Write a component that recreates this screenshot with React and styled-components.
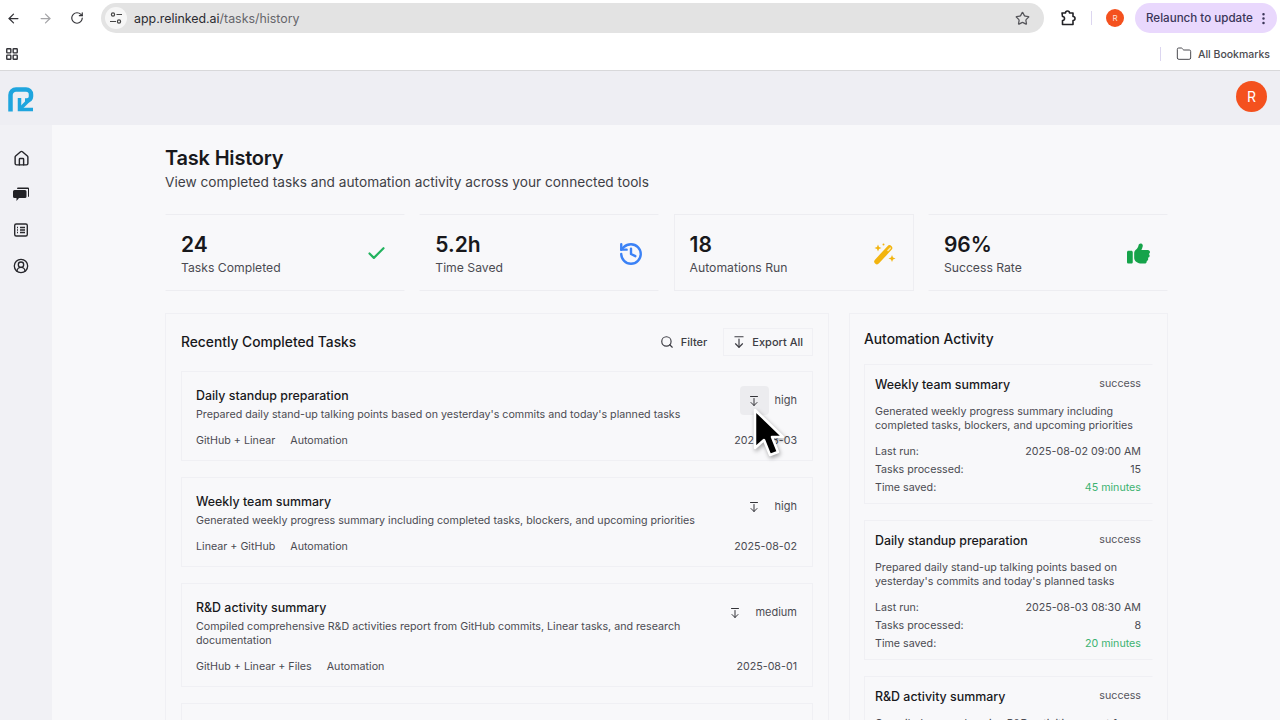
import styled, { createGlobalStyle } from "styled-components";
import {
  ArrowDownFromLine,
  ArrowLeft,
  ArrowRight,
  Check,
  CircleUserRound,
  EllipsisVertical,
  Folder,
  History,
  Home,
  LayoutGrid,
  RotateCw,
  Search,
  Star,
} from "lucide-react";
import { FaThumbsUp } from "react-icons/fa6";

const GlobalStyle = createGlobalStyle`
  html, body {
    margin: 0;
    height: 100%;
    overflow: hidden;
    background: #f8f8fa;
    font-family: Inter, "Liberation Sans", sans-serif;
  }
  * { box-sizing: border-box; }
`;

const Page = styled.div`
  position: relative;
  width: 1280px;
  height: 720px;
  display: flex;
  flex-direction: column;
  overflow: hidden;
`;

const Toolbar = styled.div`
  height: 36px;
  flex: none;
  display: flex;
  align-items: center;
  background: #fff;
  color: #3c3c40;
  padding: 0 3px 0 5px;
`;

const NavButton = styled.span`
  width: 16px;
  height: 16px;
  margin-right: 16px;
  display: flex;
  align-items: center;
  justify-content: center;
  color: ${(p) => (p.$off ? "#a5a5a8" : "#333338")};
`;

const UrlBar = styled.div`
  width: 943px;
  height: 30px;
  border-radius: 15px;
  background: #e3e3e3;
  display: flex;
  align-items: center;
  padding: 0 14px 0 4px;
  font-size: 12.4px;
  color: #66666b;
`;

const SiteChip = styled.span`
  width: 22px;
  height: 22px;
  border-radius: 50%;
  background: #f6f6f6;
  display: flex;
  align-items: center;
  justify-content: center;
  margin-right: 7px;
`;

const Host = styled.span`
  color: #2b2b30;
`;

const UrlEnd = styled.span`
  margin-left: auto;
  display: flex;
  color: #55555a;
`;

const ToolIcon = styled.span`
  margin-left: 15px;
  display: flex;
  color: #222226;
`;

const VDivider = styled.span`
  width: 1px;
  height: 14px;
  background: #dcd6f0;
  margin: 0 ${(p) => p.$right}px 0 ${(p) => p.$left}px;
`;

const MiniAvatar = styled.span`
  width: 18px;
  height: 18px;
  border-radius: 50%;
  background: #f4511e;
  color: #fde0d4;
  font-size: 8px;
  display: flex;
  align-items: center;
  justify-content: center;
`;

const Relaunch = styled.div`
  width: 142px;
  height: 30px;
  margin-left: 11px;
  border-radius: 15px;
  background: #e9d8fd;
  color: #3a3558;
  font-size: 11.6px;
  font-weight: 500;
  display: flex;
  align-items: center;
  padding-left: 11px;
  white-space: nowrap;
  gap: 3px;
`;

const BookmarksBar = styled.div`
  height: 35px;
  flex: none;
  background: #fff;
  border-bottom: 1px solid #d8d8da;
  display: flex;
  align-items: center;
  padding: 2px 10px 0 5px;
  color: #333338;
`;

const AllBookmarks = styled.div`
  margin-left: auto;
  display: flex;
  align-items: center;
  font-size: 10.5px;
  font-weight: 500;
  color: #4b4b50;
  gap: 6px;
`;

const AppHeader = styled.header`
  height: 54px;
  flex: none;
  background: #eeeef3;
  display: flex;
  align-items: center;
  justify-content: space-between;
  padding: 0 13px 0 8px;
`;

const LogoMark = styled.svg`
  margin-top: 3px;
`;

const Avatar = styled.span`
  width: 31px;
  height: 31px;
  margin-bottom: 3px;
  border-radius: 50%;
  background: #f4511e;
  color: #fff;
  font-size: 14px;
  display: flex;
  align-items: center;
  justify-content: center;
`;

const Body = styled.div`
  flex: 1;
  min-height: 0;
  display: flex;
`;

const Sidebar = styled.nav`
  width: 52px;
  flex: none;
  background: #f1f1f5;
  display: flex;
  flex-direction: column;
  align-items: center;
  padding: 24px 10px 0 0;
  gap: 18px;
  color: #26262b;
`;

const SideIcon = styled.span`
  width: 18px;
  height: 18px;
  display: flex;
  align-items: center;
  justify-content: center;
`;

const Main = styled.main`
  flex: 1;
  min-width: 0;
  padding: 21px 0 0 113px;
  color: #18181c;
`;

const Title = styled.h1`
  margin: 0;
  font-size: 20px;
  line-height: 24px;
  font-weight: 600;
  letter-spacing: -0.2px;
`;

const Subtitle = styled.p`
  margin: 3px 0 0;
  font-size: 13.7px;
  line-height: 18px;
  color: #3f3f46;
`;

const Stats = styled.section`
  width: 1003px;
  margin-top: 23px;
  display: grid;
  grid-template-columns: repeat(4, 240px);
  column-gap: 14.3px;
`;

const StatCard = styled.div`
  height: 77px;
  border: 1px solid ${(p) => (p.$boxed ? "#eeeef2" : "transparent")};
  border-top-color: #ededf1;
  border-bottom-color: #ededf1;
  display: flex;
  align-items: center;
  justify-content: space-between;
  padding: 2px 17px 0 15px;
`;

const StatValue = styled.div`
  font-size: 21px;
  line-height: 26px;
  font-weight: 600;
`;

const StatLabel = styled.div`
  font-size: 12.2px;
  line-height: 16px;
  margin-top: 2px;
  color: #4b4b52;
`;

const StatIcon = styled.span`
  display: flex;
  margin-right: ${(p) => p.$nudge || 0}px;
  color: ${(p) => p.$color};
`;

const Columns = styled.div`
  width: 1003px;
  margin-top: 22px;
  display: flex;
  justify-content: space-between;
  align-items: flex-start;
`;

const Panel = styled.section`
  width: ${(p) => p.$width}px;
  border: 1px solid #f0f0f4;
  border-bottom: 0;
  padding: 14px ${(p) => p.$pad}px 0;
  display: flex;
  flex-direction: column;
  gap: 16px;
`;

const PanelHeader = styled.div`
  height: ${(p) => p.$height}px;
  display: flex;
  align-items: center;
  margin-bottom: ${(p) => p.$after || 0}px;
`;

const PanelTitle = styled.h2`
  margin: 0;
  font-size: 13.8px;
  font-weight: 500;
  flex: 1;
`;

const PlainAction = styled.span`
  display: flex;
  align-items: center;
  gap: 7px;
  font-size: 11px;
  font-weight: 500;
  color: #3d3d44;
  height: 28px;
`;

const BoxedAction = styled(PlainAction)`
  gap: 6px;
  padding: 0 9px 0 8px;
  margin-left: 16px;
  border: 1px solid #f0f0f4;
`;

const TaskCard = styled.article`
  border: 1px solid #f0f0f4;
  padding: 15px 15px 0 14px;
  min-height: ${(p) => p.$height || 90}px;
`;

const TaskTop = styled.div`
  display: flex;
  justify-content: space-between;
  align-items: flex-start;
`;

const TaskText = styled.div`
  width: 520px;
`;

const TaskTitle = styled.div`
  font-size: 12.4px;
  line-height: 18px;
  font-weight: 500;
`;

const TaskDesc = styled.div`
  font-size: 10.7px;
  line-height: 14px;
  margin-top: 3px;
  color: #4b4b52;
`;

const Priority = styled.div`
  display: flex;
  align-items: center;
  gap: 6px;
  margin-top: -1px;
  font-size: 11px;
  color: #4b4b52;
`;

const Level = styled.span`
  margin-bottom: 2px;
`;

const RowIcon = styled.span`
  width: 29px;
  height: 29px;
  border-radius: 4px;
  background: ${(p) => (p.$hover ? "#ececef" : "transparent")};
  display: flex;
  align-items: center;
  justify-content: center;
  color: #333338;
`;

const TaskMeta = styled.div`
  display: flex;
  font-size: 10.7px;
  line-height: 14px;
  color: #4b4b52;
  margin-top: ${(p) => p.$gap}px;
  gap: 15px;
`;

const TaskDate = styled.span`
  margin-left: auto;
`;

const ActivityCard = styled.article`
  border: 1px solid #f0f0f4;
  border-right-color: transparent;
  padding: 11px 11px 0 10px;
  height: 140px;
`;

const ActivityTop = styled.div`
  display: flex;
  justify-content: space-between;
  align-items: flex-start;
`;

const ActivityName = styled.div`
  font-size: 12.4px;
  line-height: 17px;
  font-weight: 500;
`;

const ActivityStatus = styled.span`
  font-size: 10.7px;
  line-height: 15px;
  color: #55555c;
`;

const ActivityDesc = styled.div`
  font-size: 10.7px;
  line-height: 14px;
  margin: 12px 0 10px;
  color: #4b4b52;
`;

const InfoRow = styled.div`
  display: flex;
  justify-content: space-between;
  font-size: 10.7px;
  line-height: 18px;
  color: #4b4b52;
`;

const InfoValue = styled.span`
  color: ${(p) => (p.$good ? "#3cb371" : "#4b4b52")};
`;

const CursorMark = styled.svg`
  position: absolute;
  left: 752px;
  top: 407px;
  filter: drop-shadow(1px 2px 2px rgba(0, 0, 0, 0.35));
`;

const tasks = [
  {
    title: "Daily standup preparation",
    desc: "Prepared daily stand-up talking points based on yesterday's commits and today's planned tasks",
    tools: "GitHub + Linear",
    level: "high",
    date: "2025-08-03",
    hover: true,
  },
  {
    title: "Weekly team summary",
    desc: "Generated weekly progress summary including completed tasks, blockers, and upcoming priorities",
    tools: "Linear + GitHub",
    level: "high",
    date: "2025-08-02",
  },
  {
    title: "R&D activity summary",
    desc: "Compiled comprehensive R&D activities report from GitHub commits, Linear tasks, and research documentation",
    tools: "GitHub + Linear + Files",
    level: "medium",
    date: "2025-08-01",
    height: 104,
  },
];

const activity = [
  {
    name: "Weekly team summary",
    desc: "Generated weekly progress summary including completed tasks, blockers, and upcoming priorities",
    run: "2025-08-02 09:00 AM",
    count: "15",
    saved: "45 minutes",
  },
  {
    name: "Daily standup preparation",
    desc: "Prepared daily stand-up talking points based on yesterday's commits and today's planned tasks",
    run: "2025-08-03 08:30 AM",
    count: "8",
    saved: "20 minutes",
  },
  {
    name: "R&D activity summary",
    desc: "Compiled comprehensive R&D activities report from GitHub commits, Linear tasks",
    run: "2025-08-01 04:15 PM",
    count: "12",
    saved: "1 hour",
  },
];

function Logo() {
  return (
    <LogoMark width="26" height="26" viewBox="0 0 26 26" fill="none" stroke="#1fa5de" strokeWidth="4.500">
      <path d="M2.500 24.500V8a5.500 5.500 0 0 1 5.500-5.500h10a5 5 0 0 1 5 5v2a4 4 0 0 1-4 4h-2" />
      <path d="M11.500 11v11.500H25" strokeWidth="3.500" />
      <path d="M12.500 21.500l8-8" strokeWidth="3.500" />
    </LogoMark>
  );
}

function SiteIcon() {
  return (
    <svg width="14" height="14" viewBox="0 0 14 14" fill="none" stroke="#444" strokeWidth="1.200">
      <circle cx="4" cy="3.500" r="1.600" />
      <path d="M7.500 3.500H13M1 10.500h6" />
      <circle cx="10" cy="10.500" r="1.600" />
    </svg>
  );
}

function ExtensionIcon() {
  return (
    <svg width="18" height="18" viewBox="0 0 18 18" fill="none" stroke="currentColor" strokeWidth="1.600" strokeLinejoin="round">
      <path d="M3 4h3.500a2 2 0 0 1 4 0H14v3.500a2 2 0 0 1 0 4v4H3.500v-4a2 2 0 0 0 0-4z" />
    </svg>
  );
}

function ChatIcon() {
  return (
    <svg width="18" height="18" viewBox="0 0 18 18" fill="#222226">
      <path d="M5.500 2.500h10.500a1 1 0 0 1 1 1v8l-1 .6V4H5z" />
      <path d="M2.500 5h10.500a1.500 1.500 0 0 1 1.500 1.500v5a1.500 1.500 0 0 1-1.500 1.500H7l-2.500 3v-3h-2A1.500 1.500 0 0 1 1 11.500v-5A1.500 1.500 0 0 1 2.500 5z" />
    </svg>
  );
}

function ListIcon() {
  return (
    <svg width="16" height="16" viewBox="0 0 16 16" fill="none" stroke="#2a2a2e" strokeWidth="1.400">
      <rect x="1.700" y="2" width="12.600" height="12" rx="1.500" />
      <path d="M7 5.500h5M7 8h5M7 10.500h5M4 5.500h1M4 8h1M4 10.500h1" />
    </svg>
  );
}

function WandIcon() {
  return (
    <svg width="24" height="22" viewBox="0 0 24 22" fill="#f2b40f">
      <path d="M4 18.500L16.500 5" stroke="#f2b40f" strokeWidth="5.500" strokeLinecap="round" />
      <path d="M15 7.500l2.200-2.300" stroke="#fbe7a8" strokeWidth="1.600" strokeLinecap="round" />
      <path d="M5 1.500l1 2.500 2.500 1-2.500 1-1 2.500-1-2.500-2.500-1 2.500-1z" />
      <path d="M19 12l1 2.500 2.500 1-2.500 1-1 2.500-1-2.500-2.500-1 2.500-1z" />
      <circle cx="10.500" cy="1.500" r="1" />
    </svg>
  );
}

function Cursor() {
  return (
    <CursorMark width="32" height="54" viewBox="0 0 32 54">
      <path
        d="M3 3v38l9-8 6 15 8-3-6-15h11z"
        fill="#000"
        stroke="#fff"
        strokeWidth="2.500"
        strokeLinejoin="round"
      />
    </CursorMark>
  );
}

function App() {
  return (
    <Page>
      <GlobalStyle />

      <Toolbar>
        <NavButton><ArrowLeft size={15} /></NavButton>
        <NavButton $off><ArrowRight size={15} /></NavButton>
        <NavButton><RotateCw size={14} /></NavButton>
        <UrlBar>
          <SiteChip><SiteIcon /></SiteChip>
          <Host>app.relinked.ai</Host>/tasks/history
          <UrlEnd><Star size={15} /></UrlEnd>
        </UrlBar>
        <ToolIcon><ExtensionIcon /></ToolIcon>
        <VDivider $left={14} $right={14} />
        <MiniAvatar>R</MiniAvatar>
        <Relaunch>
          Relaunch to update
          <EllipsisVertical size={15} />
        </Relaunch>
      </Toolbar>

      <BookmarksBar>
        <LayoutGrid size={14} strokeWidth={2.400} />
        <AllBookmarks>
          <VDivider $left={0} $right={9} />
          <Folder size={16} strokeWidth={1.500} />
          All Bookmarks
        </AllBookmarks>
      </BookmarksBar>

      <AppHeader>
        <Logo />
        <Avatar>R</Avatar>
      </AppHeader>

      <Body>
        <Sidebar>
          <SideIcon><Home size={17} /></SideIcon>
          <SideIcon><ChatIcon /></SideIcon>
          <SideIcon><ListIcon /></SideIcon>
          <SideIcon><CircleUserRound size={16} /></SideIcon>
        </Sidebar>

        <Main>
          <Title>Task History</Title>
          <Subtitle>View completed tasks and automation activity across your connected tools</Subtitle>

          <Stats>
            <StatCard>
              <div>
                <StatValue>24</StatValue>
                <StatLabel>Tasks Completed</StatLabel>
              </div>
              <StatIcon $color="#22b35e"><Check size={21} strokeWidth={2.500} /></StatIcon>
            </StatCard>
            <StatCard>
              <div>
                <StatValue>5.2h</StatValue>
                <StatLabel>Time Saved</StatLabel>
              </div>
              <StatIcon $color="#3b82f6" $nudge={-3}><History size={26} strokeWidth={2.200} /></StatIcon>
            </StatCard>
            <StatCard $boxed>
              <div>
                <StatValue>18</StatValue>
                <StatLabel>Automations Run</StatLabel>
              </div>
              <StatIcon $color="#f2b40f" $nudge={-1}><WandIcon /></StatIcon>
            </StatCard>
            <StatCard>
              <div>
                <StatValue>96%</StatValue>
                <StatLabel>Success Rate</StatLabel>
              </div>
              <StatIcon $color="#16a34a"><FaThumbsUp size={23} /></StatIcon>
            </StatCard>
          </Stats>

          <Columns>
            <Panel $width={664} $pad={15}>
              <PanelHeader $height={28} $after={-1}>
                <PanelTitle>Recently Completed Tasks</PanelTitle>
                <PlainAction><Search size={14} />Filter</PlainAction>
                <BoxedAction><ArrowDownFromLine size={14} />Export All</BoxedAction>
              </PanelHeader>
              {tasks.map((task) => (
                <TaskCard key={task.title} $height={task.height}>
                  <TaskTop>
                    <TaskText>
                      <TaskTitle>{task.title}</TaskTitle>
                      <TaskDesc>{task.desc}</TaskDesc>
                    </TaskText>
                    <Priority>
                      <RowIcon $hover={task.hover}><ArrowDownFromLine size={12} /></RowIcon>
                      <Level>{task.level}</Level>
                    </Priority>
                  </TaskTop>
                  <TaskMeta $gap={12}>
                    <span>{task.tools}</span>
                    <span>Automation</span>
                    <TaskDate>{task.date}</TaskDate>
                  </TaskMeta>
                </TaskCard>
              ))}
              <TaskCard />
            </Panel>

            <Panel $width={319} $pad={14}>
              <PanelHeader $height={22} $after={-2}>
                <PanelTitle>Automation Activity</PanelTitle>
              </PanelHeader>
              {activity.map((item) => (
                <ActivityCard key={item.name}>
                  <ActivityTop>
                    <ActivityName>{item.name}</ActivityName>
                    <ActivityStatus>success</ActivityStatus>
                  </ActivityTop>
                  <ActivityDesc>{item.desc}</ActivityDesc>
                  <InfoRow><span>Last run:</span><InfoValue>{item.run}</InfoValue></InfoRow>
                  <InfoRow><span>Tasks processed:</span><InfoValue>{item.count}</InfoValue></InfoRow>
                  <InfoRow><span>Time saved:</span><InfoValue $good>{item.saved}</InfoValue></InfoRow>
                </ActivityCard>
              ))}
            </Panel>
          </Columns>
        </Main>
      </Body>

      <Cursor />
    </Page>
  );
}

export default App;
